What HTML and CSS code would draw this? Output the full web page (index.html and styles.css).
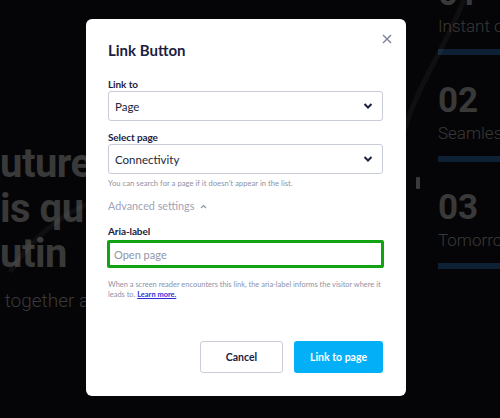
FILE: index.html
```html
<!DOCTYPE html>
<html lang="en">
<head>
    <meta charset="UTF-8">
    <meta name="viewport" content="width=device-width, initial-scale=1.0">
    <title>Link Button</title>
    <link rel="stylesheet" href="styles.css">
</head>
<body>
    <div class="page">
        <svg class="glow" width="500" height="418" viewBox="0 0 500 418">
            <path d="M 466 -6 C 450 40 420 80 404 130" />
            <path d="M 10 272 C 30 240 60 215 92 202" />
        </svg>
        <div class="hero">
            <div class="hero-title">
                <div>uture</div>
                <div>is qu</div>
                <div>utin</div>
            </div>
            <p class="hero-sub">&nbsp;together ac</p>
        </div>
        <div class="mark"></div>
        <div class="features">
            <div class="feature">
                <div class="num">01</div>
                <div class="desc">Instant c</div>
                <div class="bar"></div>
            </div>
            <div class="feature">
                <div class="num">02</div>
                <div class="desc">Seamles</div>
                <div class="bar"></div>
            </div>
            <div class="feature">
                <div class="num">03</div>
                <div class="desc">Tomorro</div>
                <div class="bar"></div>
            </div>
        </div>
    </div>

    <div class="overlay">
        <div class="modal">
            <button class="close" aria-label="Close">
                <svg width="10" height="10" viewBox="0 0 10 10">
                    <path d="M1 1 L9 9 M9 1 L1 9" />
                </svg>
            </button>
            <h2 class="modal-title">Link Button</h2>

            <label class="field-label">Link to</label>
            <div class="select">
                <span>Page</span>
                <svg class="chev" width="10" height="6" viewBox="0 0 10 6"><path d="M1.5 1 L5 4.5 L8.5 1" /></svg>
            </div>

            <label class="field-label spaced">Select page</label>
            <div class="select">
                <span>Connectivity</span>
                <svg class="chev" width="10" height="6" viewBox="0 0 10 6"><path d="M1.5 1 L5 4.5 L8.5 1" /></svg>
            </div>
            <p class="hint">You can search for a page if it doesn't appear in the list.</p>

            <div class="advanced">
                Advanced settings
                <svg width="7" height="5" viewBox="0 0 7 5"><path d="M1 4 L3.5 1.5 L6 4" /></svg>
            </div>

            <label class="field-label aria">Aria-label</label>
            <input class="text-input" type="text" placeholder="Open page">
            <p class="hint help">When a screen reader encounters this link, the aria-label informs the visitor where it leads to. <a href="#">Learn more.</a></p>

            <div class="actions">
                <button class="btn btn-cancel">Cancel</button>
                <button class="btn btn-primary">Link to page</button>
            </div>
        </div>
    </div>
</body>
</html>
```

FILE: styles.css
```css
body {
    margin: 0;
    width: 500px;
    height: 418px;
    overflow: hidden;
    background-color: #050507;
    font-family: Lato, 'Open Sans', sans-serif;
    position: relative;
}
.page {
    display: flex;
    height: 418px;
    font-family: Roboto, sans-serif;
    color: #393939;
}
.glow {
    position: absolute;
    top: 0;
    left: 0;
}
.glow path {
    fill: none;
    stroke: rgba(255, 255, 255, 0.045);
    stroke-width: 5;
}
.hero {
    width: 416px;
    flex-shrink: 0;
    padding-top: 141px;
}
.hero-title {
    font-size: 40px;
    font-weight: 700;
    line-height: 45px;
    letter-spacing: -0.5px;
}
.hero-sub {
    margin: 13px 0 0;
    font-size: 19px;
    font-weight: 300;
    line-height: 24px;
}
.mark {
    width: 4px;
    height: 12px;
    margin-top: 177px;
    background-color: #3a3a3a;
    border-radius: 1px;
    flex-shrink: 0;
}
.features {
    margin-left: 18px;
    margin-top: -24px;
    flex-shrink: 0;
    width: 120px;
}
.feature {
    padding-bottom: 28px;
}
.num {
    font-size: 35px;
    font-weight: 700;
    line-height: 36px;
}
.desc {
    margin-top: 4px;
    font-size: 17px;
    font-weight: 300;
    line-height: 20px;
    white-space: nowrap;
}
.bar {
    margin-top: 13px;
    height: 6px;
    background-color: #0e2134;
}

/* modal */
.overlay {
    position: absolute;
    top: 0;
    left: 0;
    width: 500px;
    height: 418px;
}
.modal {
    position: relative;
    box-sizing: border-box;
    width: 320px;
    height: 377px;
    margin: 19px 0 0 86px;
    padding: 21px 23px 0 22px;
    background-color: #fff;
    border-radius: 6px;
    color: #1b2142;
}
.close {
    position: absolute;
    top: 15px;
    right: 14px;
    padding: 0;
    border: none;
    background: none;
    line-height: 0;
}
.close path {
    stroke: #7b8199;
    stroke-width: 1.4;
    fill: none;
}
.modal-title {
    margin: 0;
    font-size: 15px;
    font-weight: 700;
    line-height: 20px;
}
.field-label {
    display: block;
    margin-top: 18px;
    font-size: 10px;
    font-weight: 700;
    line-height: 13px;
    letter-spacing: -0.1px;
}
.field-label.spaced {
    margin-top: 10px;
}
.select {
    display: flex;
    align-items: center;
    justify-content: space-between;
    box-sizing: border-box;
    height: 30px;
    padding: 0 9px 0 6px;
    border: 1px solid #c9ccd9;
    border-radius: 3px;
    font-size: 11.5px;
    color: #22263d;
}
.chev path {
    fill: none;
    stroke: #1b2142;
    stroke-width: 2;
}
.hint {
    margin: 4px 0 0;
    font-size: 7.7px;
    line-height: 10px;
    color: #8d92a6;
}
.advanced {
    display: flex;
    align-items: center;
    gap: 6px;
    margin-top: 10px;
    font-size: 10.8px;
    line-height: 16px;
    color: #a0a4b8;
}
.advanced path {
    fill: none;
    stroke: #8d92a6;
    stroke-width: 1.2;
}
.field-label.aria {
    margin-top: 11px;
    margin-bottom: 2px;
}
.text-input {
    display: block;
    box-sizing: border-box;
    width: 277px;
    height: 28px;
    margin-left: -1px;
    padding: 0 4px;
    border: 3px solid #12a312;
    border-radius: 2px;
    font-family: inherit;
    font-size: 11px;
    outline: none;
}
.text-input::placeholder {
    color: #8f94a8;
}
.help {
    margin-top: 12px;
    font-size: 7.45px;
}
.help a {
    color: #2d2ed9;
    font-weight: 700;
}
.actions {
    display: flex;
    justify-content: flex-end;
    gap: 11px;
    margin-top: 41px;
}
.btn {
    height: 32px;
    border-radius: 3px;
    font-family: inherit;
    font-size: 10.5px;
    font-weight: 700;
    cursor: pointer;
}
.btn-cancel {
    width: 83px;
    border: 1px solid #c9ccd9;
    background-color: #fff;
    color: #1b2142;
}
.btn-primary {
    width: 89px;
    border: none;
    background-color: #03b0f8;
    color: #fff;
}
```
